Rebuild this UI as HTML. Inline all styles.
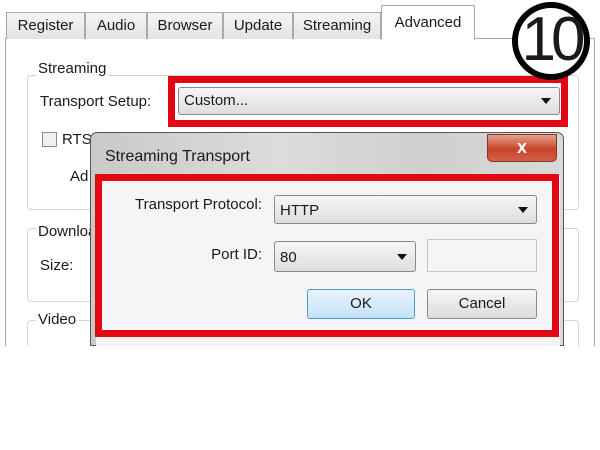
<!DOCTYPE html>
<html><head><style>
*{margin:0;padding:0;box-sizing:border-box}
body{width:600px;height:450px;background:#fff;position:relative;overflow:hidden;font-family:"Liberation Sans",sans-serif;font-size:15px;color:#1a1a1a}
.a{position:absolute}
.tab{position:absolute;top:12px;height:27px;border:1px solid #a9a9a9;border-bottom:none;background:linear-gradient(#f4f4f4,#e4e4e4);font-size:15px;text-align:center;line-height:26px}
.grp{position:absolute;border:1px solid #d6d6d6;border-radius:4px}
.lbl{position:absolute;background:#fff;padding:0 2px;font-size:15px}
.combo{position:absolute;border:1px solid #8a8a8a;border-radius:3px;background:linear-gradient(#f6f6f6,#dedede);font-size:15px;padding-left:5px}
.arr{position:absolute;right:8px;top:50%;margin-top:-3px;width:0;height:0;border-left:5px solid transparent;border-right:5px solid transparent;border-top:6px solid #111}
.red{position:absolute;border:7px solid #e30613}
</style></head><body>
<div class="a" style="left:0;top:0;width:600px;height:346px;background:#fff"></div>
<div class="a" style="left:5px;top:38px;width:590px;height:320px;border:1px solid #a9a9a9;background:#fff"></div>
<div class="tab" style="left:6px;width:79px">Register</div>
<div class="tab" style="left:85px;width:62px">Audio</div>
<div class="tab" style="left:147px;width:76px">Browser</div>
<div class="tab" style="left:223px;width:70px">Update</div>
<div class="tab" style="left:293px;width:88px">Streaming</div>
<div class="tab" style="left:381px;top:5px;width:94px;height:35px;background:#fff;line-height:34px;z-index:2">Advanced</div>
<div class="a" style="left:512px;top:2px;width:78px;height:78px;border:6px solid #000;border-radius:50%;background:#fff;font-size:62px;line-height:64px;text-align:center;letter-spacing:-5px;z-index:5">10</div>
<div class="grp" style="left:27px;top:75px;width:552px;height:135px"></div>
<div class="lbl" style="left:36px;top:60px">Streaming</div>
<div class="a" style="left:40px;top:93px">Transport Setup:</div>
<div class="red" style="left:168px;top:76px;width:400px;height:51px;z-index:3"></div>
<div class="combo" style="left:178px;top:87px;width:382px;height:28px;line-height:26px">Custom...<div class="arr"></div></div>
<div class="a" style="left:42px;top:132px;width:15px;height:15px;border:1px solid #8a8a8a;background:#f0f0f0"></div>
<div class="a" style="left:62px;top:131px">RTS</div>
<div class="a" style="left:70px;top:168px">Ad</div>
<div class="grp" style="left:27px;top:228px;width:552px;height:74px"></div>
<div class="lbl" style="left:36px;top:223px">Download</div>
<div class="a" style="left:40px;top:257px">Size:</div>
<div class="grp" style="left:27px;top:320px;width:552px;height:60px"></div>
<div class="lbl" style="left:36px;top:311px">Video</div>
<div class="a" style="left:90px;top:132px;width:474px;height:214px;border:1px solid #555;border-radius:7px 7px 0 0;background:linear-gradient(90deg,#c9c9c9,#dcdcdc 40%,#cfcfcf 70%,#d9d9d9);z-index:4">
<div class="a" style="left:14px;top:15px;font-size:16px">Streaming Transport</div>
<div class="a" style="left:396px;top:1px;width:70px;height:28px;border:1px solid #7a3a2a;border-radius:0 0 5px 5px;background:linear-gradient(#e3a08d,#c8442a 55%,#d2604a);color:#fff;font-weight:bold;text-align:center;font-size:18px;line-height:24px">x</div>
<div class="a" style="left:5px;top:42px;width:464px;height:172px;background:#f3f3f3"></div>
</div>
<div class="red" style="left:95px;top:174px;width:464px;height:163px;z-index:6"></div>
<div style="position:absolute;left:0;top:0;z-index:7">
<div class="a" style="left:102px;top:181px;width:450px;height:149px;background:#f5f5f5"></div>
<div class="a" style="left:110px;top:196px;width:152px;text-align:right">Transport Protocol:</div>
<div class="combo" style="left:274px;top:195px;width:263px;height:29px;line-height:30px">HTTP<div class="arr"></div></div>
<div class="a" style="left:110px;top:246px;width:152px;text-align:right">Port ID:</div>
<div class="combo" style="left:274px;top:241px;width:142px;height:31px;line-height:31px">80<div class="arr"></div></div>
<div class="a" style="left:427px;top:239px;width:110px;height:33px;border:1px solid #c8c8c8;background:#f5f5f5"></div>
<div class="a" style="left:307px;top:289px;width:108px;height:30px;border:1px solid #4a9ad6;border-radius:3px;background:linear-gradient(#e8f4fc,#c4e2f6);text-align:center;line-height:28px">OK</div>
<div class="a" style="left:427px;top:289px;width:110px;height:30px;border:1px solid #8a8a8a;border-radius:3px;background:linear-gradient(#f6f6f6,#dcdcdc);text-align:center;line-height:28px">Cancel</div>
</div>
<div class="a" style="left:0;top:346px;width:600px;height:104px;background:#fff;z-index:9"></div>
</body></html>
